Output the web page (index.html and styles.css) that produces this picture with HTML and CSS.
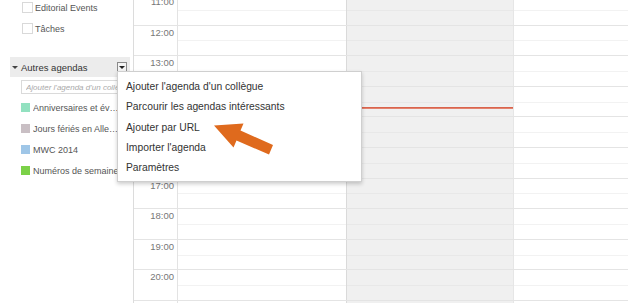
FILE: index.html
```html
<!DOCTYPE html>
<html lang="fr">
<head>
<meta charset="utf-8">
<title>Agenda</title>
<link rel="stylesheet" href="styles.css">
</head>
<body>
<div class="app">
  <aside class="sidebar">
    <ul class="my-cals">
      <li class="cal"><span class="check"></span><span class="cal-name">Editorial Events</span></li>
      <li class="cal"><span class="check"></span><span class="cal-name">Tâches</span></li>
    </ul>
    <div class="section-head">
      <span class="caret"></span>
      <span class="section-title">Autres agendas</span>
      <span class="dd-btn"></span>
    </div>
    <div class="add-box"><input class="add-input" type="text" placeholder="Ajouter l'agenda d'un collègue"></div>
    <ul class="other-cals">
      <li class="cal"><span class="swatch seafoam"></span><span class="cal-name">Anniversaires et événements</span></li>
      <li class="cal"><span class="swatch mauve"></span><span class="cal-name">Jours fériés en Allemagne</span></li>
      <li class="cal"><span class="swatch sky"></span><span class="cal-name">MWC 2014</span></li>
      <li class="cal"><span class="swatch green"></span><span class="cal-name">Numéros de semaine</span></li>
    </ul>
  </aside>
  <main class="week">
    <div class="row"><div class="time">11:00</div><div class="cell"></div><div class="cell today"></div><div class="cell last"></div></div>
    <div class="row"><div class="time">12:00</div><div class="cell"></div><div class="cell today"></div><div class="cell last"></div></div>
    <div class="row"><div class="time">13:00</div><div class="cell"></div><div class="cell today"></div><div class="cell last"></div></div>
    <div class="row"><div class="time">14:00</div><div class="cell"></div><div class="cell today"><div class="now-line"></div></div><div class="cell last"></div></div>
    <div class="row"><div class="time">15:00</div><div class="cell"></div><div class="cell today"></div><div class="cell last"></div></div>
    <div class="row"><div class="time">16:00</div><div class="cell"></div><div class="cell today"></div><div class="cell last"></div></div>
    <div class="row"><div class="time">17:00</div><div class="cell"></div><div class="cell today"></div><div class="cell last"></div></div>
    <div class="row"><div class="time">18:00</div><div class="cell"></div><div class="cell today"></div><div class="cell last"></div></div>
    <div class="row"><div class="time">19:00</div><div class="cell"></div><div class="cell today"></div><div class="cell last"></div></div>
    <div class="row"><div class="time">20:00</div><div class="cell"></div><div class="cell today"></div><div class="cell last"></div></div>
    <div class="row"><div class="time">21:00</div><div class="cell"></div><div class="cell today"></div><div class="cell last"></div></div>
  </main>
</div>
<ul class="menu">
  <li class="menu-item">Ajouter l'agenda d'un collègue</li>
  <li class="menu-item">Parcourir les agendas intéressants</li>
  <li class="menu-item">Ajouter par URL</li>
  <li class="menu-item">Importer l'agenda</li>
  <li class="menu-item">Paramètres</li>
</ul>
<svg class="arrow" viewBox="0 0 628 303" width="628" height="303" aria-hidden="true">
  <polygon points="214,125.5 243.5,123.5 240.5,130.5 273,145 269,154.5 236.5,140.5 233.5,147.5" fill="#df6a1d"/>
</svg>
</body>
</html>
```
FILE: styles.css
```css
* { box-sizing: border-box; }
html, body { margin: 0; padding: 0; }
body {
  width: 628px;
  height: 303px;
  overflow: hidden;
  position: relative;
  background: #fff;
  font-family: "Liberation Sans", Arial, sans-serif;
  font-size: 11px;
  color: #444;
}
.app { display: flex; height: 303px; }

.sidebar { width: 133px; flex: none; font-size: 9px; }
.my-cals, .other-cals { list-style: none; margin: 0; }
.my-cals { margin-top: -3px; padding-left: 22px; }
.cal {
  height: 21px;
  display: flex;
  align-items: center;
  white-space: nowrap;
  color: #555;
}
.check {
  width: 11px; height: 11px;
  border: 1px solid #d9d9d9;
  background: #fff;
  margin-right: 2px;
  flex: none;
}
.section-head {
  margin: 18px 3px 0 10px;
  height: 20px;
  background: #ececec;
  display: flex;
  align-items: center;
  padding-left: 2px;
  color: #333;
  font-size: 9.5px;
}
.caret {
  width: 0; height: 0;
  border-left: 3px solid transparent;
  border-right: 3px solid transparent;
  border-top: 3px solid #444;
  margin-right: 3px;
}
.section-title { flex: 1; }
.dd-btn {
  width: 10px; height: 10px;
  border: 1px solid #8a8a8a;
  background: #f4f4f4;
  margin-right: 3px;
  display: flex;
  align-items: center;
  justify-content: center;
}
.dd-btn::after {
  content: "";
  border-left: 3px solid transparent;
  border-right: 3px solid transparent;
  border-top: 3px solid #222;
}
.add-box { margin: 3px 0 0 21px; }
.add-input {
  display: block;
  width: 120px; height: 14px;
  border: 1px solid #dadada;
  padding: 0 4px;
  font: italic 8px "Liberation Sans", Arial, sans-serif;
  color: #999;
}
.add-input::placeholder { color: #aaa; }
.other-cals { margin-top: 3px; padding-left: 21px; }
.swatch { width: 9px; height: 9px; margin-right: 3px; flex: none; }
.seafoam { background: #92e1c0; }
.mauve { background: #c9bfc4; }
.sky { background: #9fc6e7; }
.green { background: #7bd148; }
.other-cals .cal-name { width: 87px; overflow: hidden; text-overflow: ellipsis; }

.week {
  flex: 1;
  margin-top: -6px;
  border-left: 1px solid #dcdcdc;
  overflow: hidden;
}
.row {
  display: flex;
  height: 30.6px;
  border-top: 1px solid #e4e4e4;
}
.time {
  width: 44px;
  flex: none;
  border-right: 1px solid #e3e3e3;
  text-align: right;
  padding: 1px 3px 0 0;
  font-size: 9.5px;
  color: #777;
}
.cell { width: 168px; flex: none; position: relative; }
.cell::before {
  content: "";
  position: absolute;
  left: 0; right: 0; top: 50%;
  height: 1px;
  background: #f2f2f2;
}
.cell.today {
  background: #f0f0f0;
  border-left: 1px solid #dadada;
  border-right: 1px solid #e6e6e6;
}
.cell.today::before { background: #e8e8e8; }
.cell.last { flex: 1; }
.now-line {
  position: absolute;
  left: 0; right: 0; top: 20px;
  height: 2px;
  background: #e3826e;
  border-top: 1px solid #d9644d;
}

.menu {
  position: absolute;
  left: 117px; top: 71px;
  width: 245px; height: 111px;
  margin: 0;
  padding: 5px 0 0;
  list-style: none;
  background: #fff;
  border: 1px solid #cfcfcf;
  box-shadow: 0 2px 4px rgba(0,0,0,0.2);
  color: #333;
  font-size: 10.3px;
}
.menu-item {
  height: 20.3px;
  line-height: 20px;
  padding-left: 8px;
  white-space: nowrap;
}
.arrow { position: absolute; left: 0; top: 0; pointer-events: none; }
```
